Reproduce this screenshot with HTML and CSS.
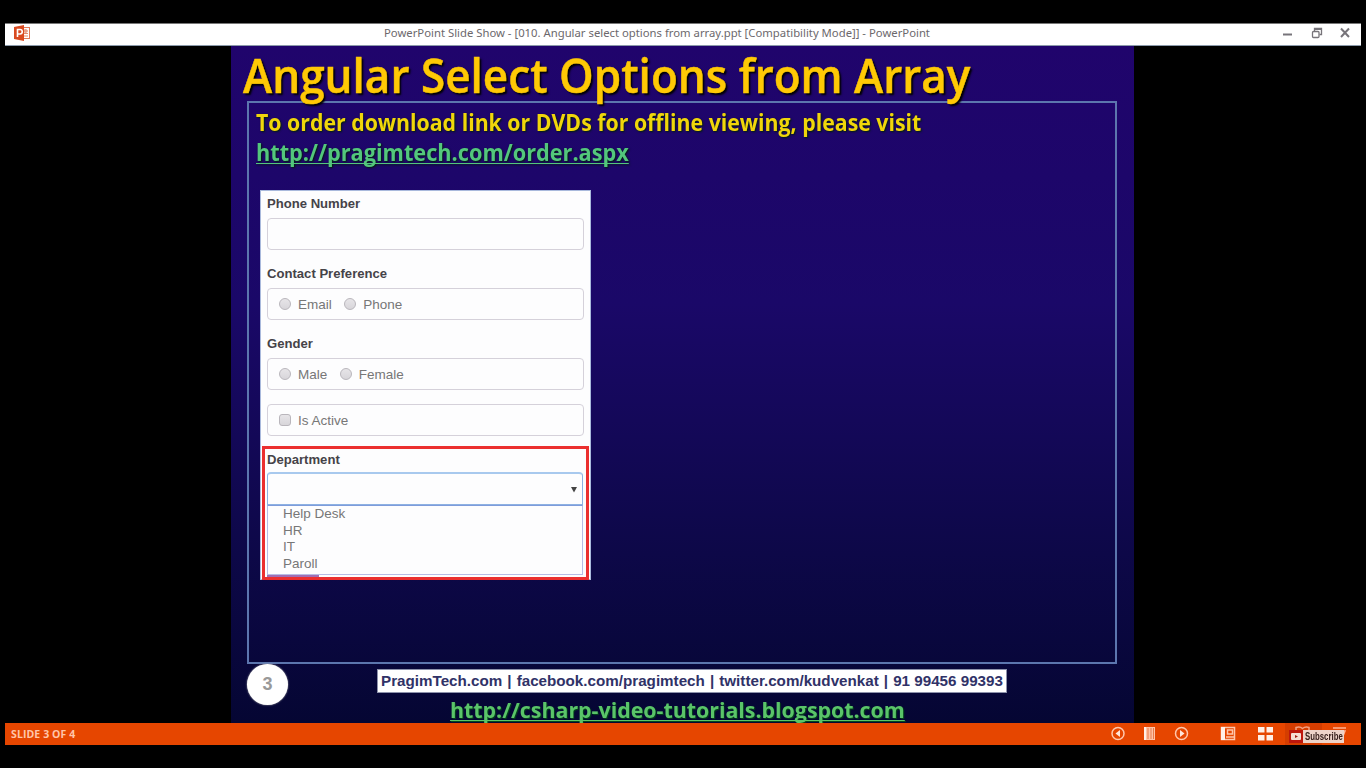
FILE: index.html
```html
<!DOCTYPE html>
<html lang="en">
<head>
<meta charset="utf-8">
<title>PowerPoint Slide Show</title>
<link rel="stylesheet" href="styles.css">
</head>
<body>
<div class="window">
  <header class="titlebar">
    <svg class="app-icon" width="18" height="16" viewBox="0 0 18 16">
      <rect x="8.500" y="2.500" width="8" height="11" fill="#fff" stroke="#e07a58"/>
      <path d="M10 6h5M10 8.500h5M10 11h5" stroke="#e58b6c"/>
      <circle cx="12.500" cy="6" r="2" fill="#e9a088"/>
      <path d="M1 2l10-2v16L1 14z" fill="#d94a20"/>
      <path d="M4.500 12V4.500H7a2 2 0 010 4.500H4.500" fill="none" stroke="#fff" stroke-width="1.600"/>
    </svg>
    <span class="caption">PowerPoint Slide Show - [010. Angular select options from array.ppt [Compatibility Mode]] - PowerPoint</span>
    <svg class="controls" width="70" height="14" viewBox="0 0 70 14" fill="none" stroke="#77747a">
      <path d="M1 8.500h9" stroke-width="2"/>
      <path d="M32.500 5V2.500h7V8.500h-2" stroke-width="1.300"/><path d="M33 3h6" stroke-width="2"/>
      <rect x="30.500" y="5.500" width="6.500" height="6" rx="1" stroke-width="1.300"/>
      <path d="M59 2.500l8 8.500M67 2.500l-8 8.500" stroke-width="2"/>
    </svg>
  </header>
  <main class="slide">
    <h1 class="heading"><span class="fit fit-heading">Angular Select Options from Array</span></h1>
    <section class="content">
      <p class="line"><span class="fit fit-order">To order download link or DVDs for offline viewing, please visit</span></p>
      <p class="line link"><span class="fit fit-link">http://pragimtech.com/order.aspx</span></p>
      <form class="form">
        <div class="label">Phone Number</div>
        <div class="field"></div>
        <div class="label">Contact Preference</div>
        <div class="field"><i class="radio"></i><span class="opt opt-email">Email</span><i class="radio"></i><span class="opt">Phone</span></div>
        <div class="label">Gender</div>
        <div class="field"><i class="radio"></i><span class="opt opt-male">Male</span><i class="radio"></i><span class="opt">Female</span></div>
        <div class="field active"><i class="check"></i><span class="opt">Is Active</span></div>
        <div class="department">
          <div class="label">Department</div>
          <div class="select"><svg width="8" height="7" viewBox="0 0 8 7"><path d="M1 1h6L4 6.500z" fill="#444"/></svg></div>
          <ul class="options"><li>Help Desk</li><li>HR</li><li>IT</li><li>Paroll</li></ul>
          <div class="edge"></div>
        </div>
      </form>
    </section>
    <footer class="footer">
      <div class="number">3</div>
      <div class="contacts">
        <div class="strip"><span>PragimTech.com</span><span>|</span><span>facebook.com/pragimtech</span><span>|</span><span>twitter.com/kudvenkat</span><span>|</span><span>91 99456 99393</span></div>
        <p class="blog"><span class="fit fit-blog">http://csharp-video-tutorials.blogspot.com</span></p>
      </div>
    </footer>
  </main>
  <div class="statusbar">
    <span class="count">SLIDE 3 OF 4</span>
    <svg class="tools" width="240" height="22" viewBox="0 0 240 22" fill="none" stroke="#ffc7ac" stroke-width="1.500">
      <circle cx="7" cy="10.500" r="6"/><path d="M9 7v7l-4.500-3.500z" fill="#ffe5d9" stroke="none"/>
      <path d="M33 4h11v13H33z" fill="#ffc4a8" stroke="none"/><path d="M37 5v11M40 5v11M42.500 5v11" stroke="#e77c4c" stroke-width="1"/><path d="M34 4v13" stroke="#fff0e8" stroke-width="2"/>
      <circle cx="70.500" cy="10.500" r="6"/><path d="M69 7v7l4.500-3.500z" fill="#ffe5d9" stroke="none"/>
      <path d="M110.500 4.500h13v12h-13z"/><path d="M112 4v13" stroke="#fff0e8" stroke-width="4"/><path d="M116.500 7h5v4h-5zM115 14h8"/>
      <path d="M147 4h6.500v5.500H147zM155.500 4h6.500v5.500h-6.500zM147 12h6.500v5.500H147zM155.500 12h6.500v5.500h-6.500z" fill="#fff0e8" stroke="none"/>
      <path d="M174 0h37v22h-37z" fill="#d43d00" stroke="none"/>
      <path d="M185 7V4.500q4-1.500 6.500 1 3-2.500 6.500-1V7" stroke="#f2a080"/>
      <path d="M222 5h13M226 8h8l-2 5h-5z" stroke="#ffb292" fill="#ffb292"/>
    </svg>
    <div class="subscribe">
      <svg width="14" height="13" viewBox="0 0 14 13"><path d="M0 0h14v13H0z" fill="#bd170d"/><rect x="2" y="3" width="10" height="7" rx="1" fill="#f5ddd5"/><path d="M6 5l3 1.500L6 8z" fill="#a31c14"/></svg>
      <span class="sub-label"><span class="fit fit-sub">Subscribe</span></span>
    </div>
  </div>
</div>
</body>
</html>
```
FILE: styles.css
```css
* { box-sizing: border-box; }
body { margin: 0; background: #000; }
.window { width: 1366px; height: 768px; padding: 23px 5px; overflow: hidden; background: #000; font-family: "Liberation Sans", sans-serif; }
.titlebar { height: 23px; background: #fff; border-bottom: 1px solid #8b9aaa; border-top: 1px solid #777; display: flex; align-items: flex-start; padding: 1px 9px 0 8px; }
.caption { font: 11.3px/16px "Noto Sans", sans-serif; color: #6c686c; white-space: nowrap; margin-left: 353px; }
.controls { margin: 1px 0 0 auto; }
.slide { width: 903px; height: 677px; margin-left: 226px; padding: 0 17px 0 16px; background: linear-gradient(#20046c, #1a0868 38%, #0d0848 75%, #050633); }
.fit { display: inline-block; white-space: nowrap; transform-origin: 0 50%; }
.fit-heading { transform: scaleX(.948); -webkit-text-stroke: .5px #ffc905; }
.fit-order { transform: scaleX(.926); }
.fit-link { transform: scaleX(.944); }
.fit-blog { transform: scaleX(.971); }
.fit-sub { transform: scaleX(.68); }
.heading { margin: 0 0 0 -4px; height: 55px; font: 600 46.5px/58px "Open Sans", sans-serif; color: #ffc905; text-shadow: 2px 2px 2px #000; white-space: nowrap; position: relative; }
.content { height: 563px; border: 2px solid #5c76ae; padding: 5px 0 0 7px; }
.line { margin: 0; height: 30px; font: 700 23px/29px "Open Sans", sans-serif; color: #f0d60b; text-shadow: 1px 1px 2px #02200c; }
.link { color: #53c77c; }
.fit-link, .fit-blog { text-decoration: underline; text-decoration-thickness: 1px; text-decoration-skip-ink: none; text-underline-offset: 2px; }
.form { width: 331px; height: 390px; margin: 22px 0 0 4px; padding: 5px 3px 0 3px; background: #fdfdfe; border: 1px solid #a9b9dc; color: #777; }
.label { height: 16px; margin: 0 3px; font: 700 13.1px/16px "Liberation Sans", sans-serif; color: #454348; }
.field { height: 32px; margin: 6px 3px 16px; border: 1px solid #d5d1da; border-radius: 4px; display: flex; align-items: center; padding-left: 11px; font-size: 13.5px; }
.field + .active { margin-top: -2px; margin-bottom: 10px; }
.radio, .check { width: 12px; height: 12px; background: linear-gradient(#e7e5e8, #d8d6da); border: 1px solid #b9b6bc; border-radius: 50%; }
.check { border-radius: 3px; }
.opt { margin-left: 7px; }
.opt-email, .opt-male { margin-right: 12.5px; }
.department { width: 327px; height: 134px; border: 3px solid #eb2f2f; padding: 3px 3px 0 2px; margin-left: -2px; }
.department .label { margin: 0; }
.select { height: 33px; margin-top: 4px; border: 1px solid #8db1e2; border-top: 2px solid #a8c9ee; border-radius: 4px 4px 0 0; display: flex; justify-content: flex-end; align-items: center; padding-right: 4px; }
.options { margin: 0; padding: 0 0 0 15px; height: 70px; border: 1px solid #b7bce5; border-top-color: #7e9cdb; list-style: none; font-size: 13.5px; line-height: 16.7px; }
.edge { width: 52px; height: 2px; background: #a06fb4; }
.footer { display: flex; }
.number { width: 41px; height: 41px; border-radius: 50%; background: #fff; box-shadow: 0 0 2px #aaa; color: #999; font: 700 18px/41px "Liberation Sans", sans-serif; text-align: center; }
.contacts { margin-left: 89px; padding-top: 5px; }
.strip { width: 630px; height: 24px; border: 1px solid #8d92ab; background: #fff; color: #303267; display: flex; justify-content: space-between; padding: 0 3px; font: 700 15.2px/22px "Liberation Sans", sans-serif; white-space: nowrap; }
.blog { margin: 2px 0 0 73px; height: 28px; font: 700 22px/29px "Open Sans", sans-serif; color: #5ac469; text-shadow: 1px 1px 1px #034818; }
.statusbar { position: relative; height: 22px; background: #e64600; display: flex; justify-content: space-between; }
.count { padding-left: 6px; font: 700 10.5px/22px "Open Sans", sans-serif; color: #ffc5a9; white-space: nowrap; letter-spacing: .1px; }
.tools { margin-right: 10px; }
.subscribe { position: absolute; right: 17px; top: 7px; display: flex; height: 13px; }
.sub-label { width: 41px; background: #eed4c9; color: #37201c; font: 700 11.5px/13px "Liberation Sans", sans-serif; padding-left: 2px; }
```
